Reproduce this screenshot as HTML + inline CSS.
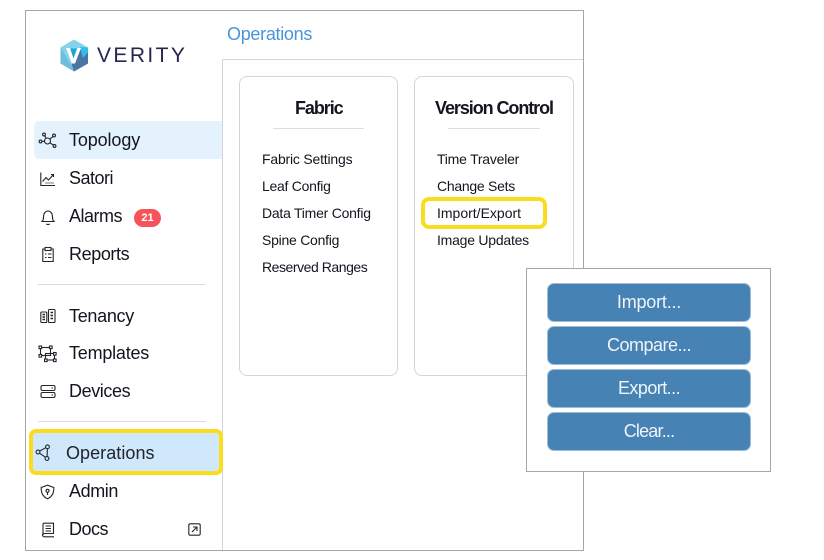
<!DOCTYPE html>
<html><head><meta charset="utf-8"><style>
html,body{margin:0;padding:0;background:#fff;width:824px;height:560px;overflow:hidden}
body{position:relative;font-family:"Liberation Sans",sans-serif;color:#14161f}
.a{position:absolute}
.t{position:absolute;white-space:nowrap;line-height:1}
.n{font-size:18px;left:69px}
.s{font-size:14px;letter-spacing:-.25px}
.h{font-size:18px;font-weight:bold;letter-spacing:-1.07px;color:#14161f}
.b{position:absolute;left:547px;width:202px;height:37px;background:#4682b4;border:1px solid #9dbdd8;border-radius:7px;color:#f0f4f8;font-size:18px;text-align:center;line-height:37px}
svg{position:absolute;fill:none;stroke:#23252e;stroke-width:1.1}
</style></head><body>
<div class="a" style="left:25px;top:10px;width:557px;height:539px;border:1.5px solid #a6a6a6"></div>
<div class="a" style="left:222px;top:59px;width:361px;height:491px;border-left:1px solid #d3d5de;border-top:1px solid #d3d5de;box-sizing:border-box"></div>

<svg style="left:58px;top:39px" width="32" height="33" viewBox="0 0 32 33">
<g stroke="none">
<path d="M16 0.5L30 8.5V24.5L16 32.5L2.5 24.5V8.5Z" fill="#85d2ea"/>
<path d="M2.5 8.5L13 26L16 32.5L2.5 24.5Z" fill="#6cc0df"/>
<path d="M30 8.5V24.5L16 32.5L13.5 25L22 9Z" fill="#4a76a4"/>
<path d="M22 8L30 8.5V13L25 19Z" fill="#2fc0ea"/>
<path d="M19 9.5L15.5 19L12 9.5Z" fill="#19a7d3"/>
<path d="M8 9H12L15.5 20L19.5 9H23L17 24.5H13.8Z" fill="#fff"/>
</g></svg>
<div class="t" style="left:97px;top:45px;font-size:21px;letter-spacing:2.4px;color:#24264f">VERITY</div>

<div class="a" style="left:34px;top:121px;width:188px;height:38px;background:#e3f2fd;border-radius:5px 0 0 5px"></div>
<div class="t n" style="top:131px;letter-spacing:-.12px">Topology</div>
<div class="t n" style="top:169px;letter-spacing:-.5px">Satori</div>
<div class="t n" style="top:207px;letter-spacing:-.5px">Alarms</div>
<div class="t n" style="top:245px;letter-spacing:-.4px">Reports</div>
<div class="a" style="left:134px;top:209px;width:27px;height:18px;border-radius:9px;background:#f5555a;color:#fff;font-size:11px;font-weight:bold;text-align:center;line-height:18px">21</div>
<div class="a" style="left:38px;top:284px;width:168px;height:1px;background:#dcdde3"></div>
<div class="t n" style="top:307px;letter-spacing:-.3px">Tenancy</div>
<div class="t n" style="top:344px;letter-spacing:-.22px">Templates</div>
<div class="t n" style="top:382px;letter-spacing:-.4px">Devices</div>
<div class="a" style="left:38px;top:421px;width:168px;height:1px;background:#dcdde3"></div>
<div class="a" style="left:29px;top:429px;width:194px;height:46px;box-sizing:border-box;background:#cfe8fc;border:4px solid #fbdd1f;border-radius:7px"></div>
<div class="t n" style="left:66px;top:444px;color:#22242c;letter-spacing:.05px">Operations</div>
<div class="t n" style="top:482px;letter-spacing:-.4px">Admin</div>
<div class="t n" style="top:520px;letter-spacing:-.5px">Docs</div>

<!-- topology -->
<svg style="left:38px;top:131px" width="20" height="20" viewBox="0 0 20 20">
<circle cx="9.5" cy="10" r="3"/><circle cx="2.5" cy="10.5" r="1.4"/><circle cx="6" cy="3.5" r="1.4"/><circle cx="16" cy="4.5" r="1.4"/><circle cx="16.5" cy="15" r="1.4"/>
<path d="M4 10.3H6.5M6.7 4.8L8.2 7.4M15 5.5L11.8 8.2M15.4 14L11.8 11.8"/></svg>
<!-- satori -->
<svg style="left:40px;top:171px" width="16" height="16" viewBox="0 0 16 16">
<path d="M0.8 1.5V14.5H15"/><path d="M2.5 10.5L6 6.5L8.5 9L13.5 3.5M11 3.5H13.5V6"/><path d="M5 12H14" stroke="#888"/></svg>
<!-- bell -->
<svg style="left:40px;top:209px" width="16" height="17" viewBox="0 0 16 17">
<path d="M2 12.5C3.5 11 3.5 10 3.5 7.5C3.5 4.5 5.5 2 8 2C10.5 2 12.5 4.5 12.5 7.5C12.5 10 12.5 11 14 12.5Z"/><path d="M6.3 14.8C7 15.8 9 15.8 9.7 14.8"/></svg>
<!-- reports -->
<svg style="left:41px;top:246px" width="14" height="17" viewBox="0 0 14 17">
<path d="M4 3H1.8V15.5H12.2V3H10"/><rect x="4" y="1.5" width="6" height="3"/><path d="M4 8H5.5M7 8H10.5M4 11.5H5.5M7 11.5H10.5"/></svg>
<!-- tenancy -->
<svg style="left:40px;top:308px" width="16" height="16" viewBox="0 0 16 16">
<rect x="0.8" y="4" width="6" height="10.5" rx="1"/><rect x="8.5" y="1.5" width="6.5" height="13" rx="1"/>
<path d="M2.5 6.5H5M2.5 9H5M2.5 11.5H5M10.5 4.5H13M10.5 7.5H13M10.5 10.5H13" stroke-width="1.6"/></svg>
<!-- templates -->
<svg style="left:38px;top:345px" width="20" height="18" viewBox="0 0 20 18">
<rect x="2.5" y="2.5" width="10" height="8"/><rect x="7.5" y="8.5" width="9" height="6.5"/>
<g fill="#fff"><rect x="1" y="1" width="2.6" height="2.6"/><rect x="11.5" y="1" width="2.6" height="2.6"/><rect x="1" y="9.5" width="2.6" height="2.6"/><rect x="6.5" y="14" width="2.6" height="2.6"/><rect x="15.5" y="7.5" width="2.6" height="2.6"/><rect x="15.5" y="14" width="2.6" height="2.6"/></g></svg>
<!-- devices -->
<svg style="left:40px;top:384px" width="16" height="15" viewBox="0 0 16 15">
<rect x="1" y="1.5" width="14" height="5" rx="1.5"/><rect x="1" y="8.5" width="14" height="5" rx="1.5"/><path d="M11.5 4H13M11.5 11H13"/></svg>
<!-- operations -->
<svg style="left:35px;top:444px" width="17" height="18" viewBox="0 0 17 18">
<circle cx="3" cy="8" r="1.9"/><circle cx="12.5" cy="2.8" r="1.9"/><circle cx="12" cy="14.5" r="1.9"/>
<path d="M4.8 7L10.8 3.7M4.5 9.2L10.5 13.3M12.4 4.7L12.1 12.6"/></svg>
<!-- admin -->
<svg style="left:40px;top:484px" width="15" height="16" viewBox="0 0 15 16">
<path d="M7.5 1.2L13.8 3.5C14 8.5 12 12.8 7.5 14.8C3 12.8 1 8.5 1.2 3.5Z"/><circle cx="7.5" cy="6.8" r="1.5"/><path d="M7.5 8.3V11"/></svg>
<!-- docs -->
<svg style="left:41px;top:522px" width="14" height="16" viewBox="0 0 14 16">
<path d="M2 13V2.5C2 1.8 2.5 1.2 3.2 1.2H12.5V11.5H3.2C2.5 11.5 1.5 12 1.5 13C1.5 14 2.5 14.8 3.2 14.8H13"/><path d="M4.5 4H10M4.5 6.5H10M4.5 9H10"/></svg>
<!-- external -->
<svg style="left:188px;top:523px" width="13" height="13" viewBox="0 0 13 13">
<rect x="0.8" y="0.8" width="11.4" height="11.4" rx="1.5"/><path d="M4 9L9 4M5 4H9V8"/></svg>

<div class="t" style="left:227px;top:25px;font-size:18px;letter-spacing:-.3px;color:#4a94dc">Operations</div>

<div class="a" style="left:239px;top:76px;width:159px;height:300px;box-sizing:border-box;border:1px solid #d3d5de;border-radius:8px"></div>
<div class="a" style="left:414px;top:76px;width:160px;height:300px;box-sizing:border-box;border:1px solid #d3d5de;border-radius:8px"></div>
<div class="t h" style="left:295px;top:99px">Fabric</div>
<div class="a" style="left:273px;top:128px;width:91px;height:1px;background:#dcdde3"></div>
<div class="t s" style="left:262px;top:152px;letter-spacing:-.2px">Fabric Settings</div>
<div class="t s" style="left:262px;top:179px;letter-spacing:-.27px">Leaf Config</div>
<div class="t s" style="left:262px;top:206px;letter-spacing:-.24px">Data Timer Config</div>
<div class="t s" style="left:262px;top:233px">Spine Config</div>
<div class="t s" style="left:262px;top:260px;letter-spacing:-.45px">Reserved Ranges</div>
<div class="t h" style="left:435px;top:99px">Version Control</div>
<div class="a" style="left:448px;top:128px;width:92px;height:1px;background:#dcdde3"></div>
<div class="t s" style="left:437px;top:152px;letter-spacing:-.23px">Time Traveler</div>
<div class="t s" style="left:437px;top:179px;letter-spacing:-.27px">Change Sets</div>
<div class="a" style="left:421px;top:197px;width:126px;height:32px;box-sizing:border-box;border:4px solid #fbdd1f;border-radius:8px"></div>
<div class="t s" style="left:437px;top:206px;letter-spacing:0">Import/Export</div>
<div class="t s" style="left:437px;top:233px;letter-spacing:-.23px">Image Updates</div>

<div class="a" style="left:526px;top:268px;width:245px;height:204px;box-sizing:border-box;background:#fff;border:1.5px solid #a6a6a6"></div>
<div class="b" style="top:283px;letter-spacing:-.2px">Import...</div>
<div class="b" style="top:326px;letter-spacing:-.5px">Compare...</div>
<div class="b" style="top:369px;letter-spacing:-.55px">Export...</div>
<div class="b" style="top:412px;letter-spacing:-.8px">Clear...</div>
</body></html>
